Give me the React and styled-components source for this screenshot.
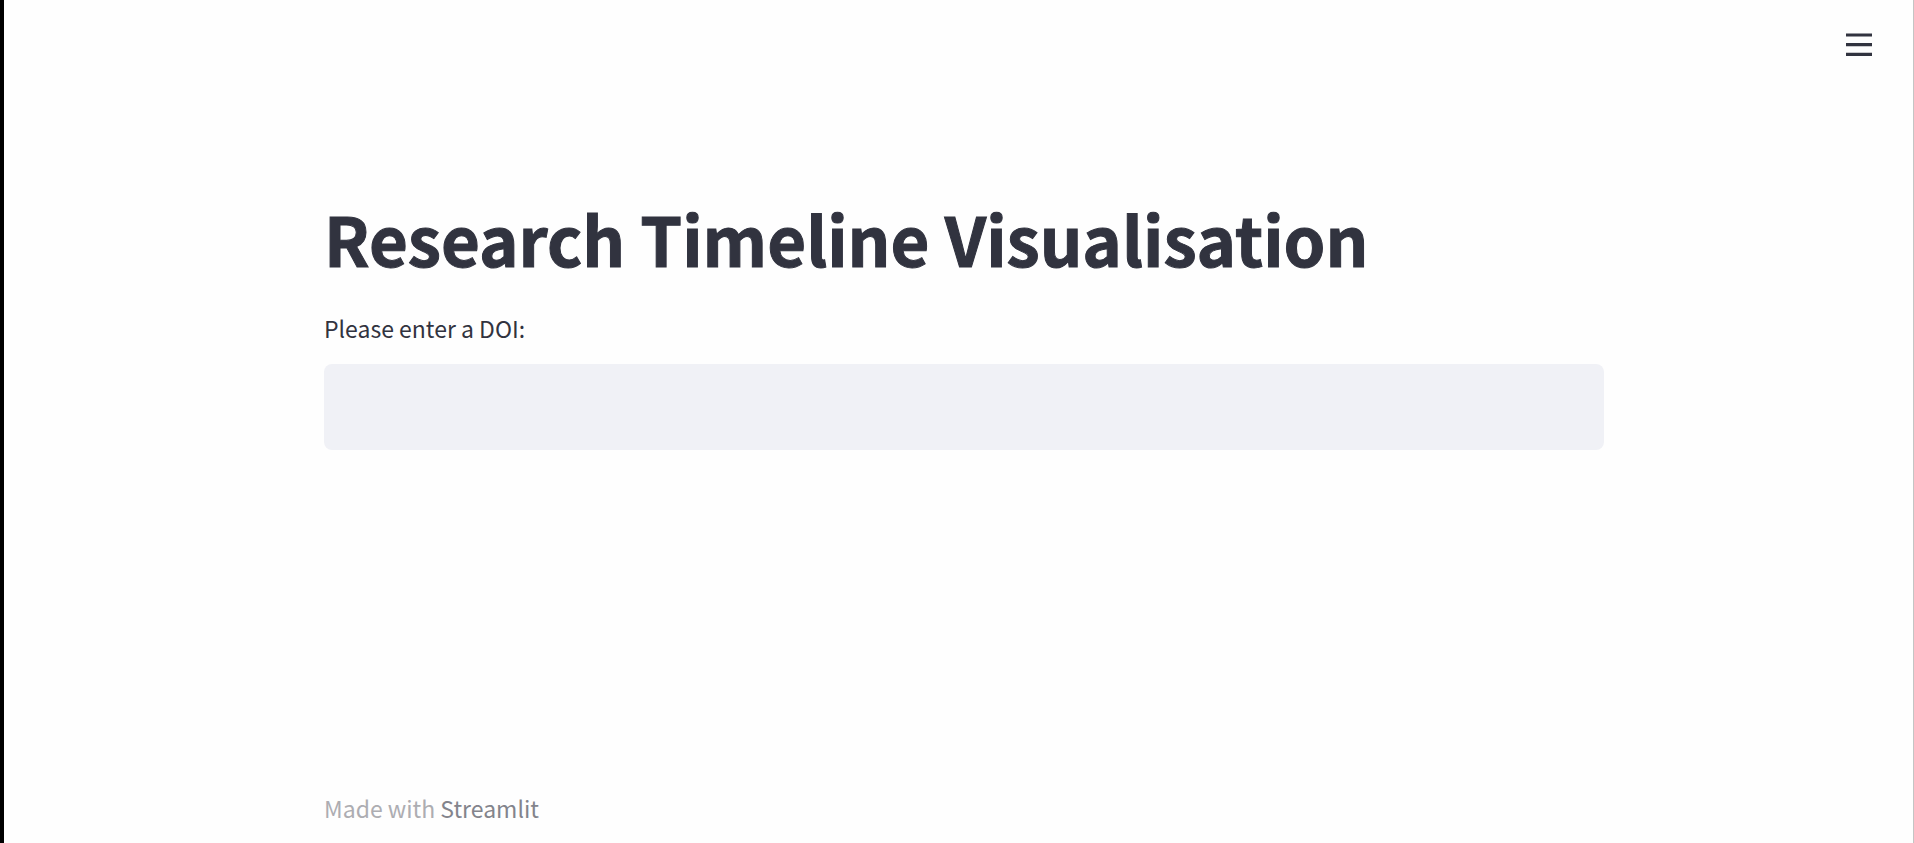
import React from "react";
import styled, { createGlobalStyle } from "styled-components";

const GlobalStyle = createGlobalStyle`
  *, *::before, *::after { box-sizing: border-box; }
  body {
    margin: 0;
    background: #fff;
    color: #31333f;
    font-family: "Noto Sans CJK SC", "Open Sans", sans-serif;
  }
`;

const Page = styled.div`
  display: flex;
  flex-direction: column;
  min-height: 100vh;
  background: #fefefe;
  border-left: 4px solid #000;
  border-right: 1px solid #c4c4c4;
`;

const Header = styled.header`
  display: flex;
  justify-content: flex-end;
  align-items: center;
  height: 90px;
  padding: 0 33px;
`;

const MenuButton = styled.button`
  display: flex;
  padding: 8px;
  border: 0;
  background: transparent;
  color: #31333f;
  cursor: pointer;
`;

const Content = styled.div`
  width: 100%;
  max-width: 1291px;
  margin: 0 auto;
  padding-left: 11px;
`;

const Main = styled(Content).attrs({ as: "main" })`
  flex: 1;
  padding-top: 98px;
`;

const Title = styled.h1`
  margin: 0;
  font-size: 67px;
  font-weight: 700;
  line-height: 100px;
  -webkit-text-stroke: 1px currentColor;
`;

const Field = styled.div`
  display: flex;
  flex-direction: column;
  gap: 18px;
  padding-top: 22px;
`;

const Label = styled.label`
  font-size: 23px;
  line-height: 36px;
`;

const TextInput = styled.input`
  width: 100%;
  height: 86px;
  padding: 0 24px;
  border: 0;
  border-radius: 8px;
  background: #f0f1f6;
  color: inherit;
  font: inherit;
  font-size: 23px;
`;

const Footer = styled(Content).attrs({ as: "footer" })`
  padding-bottom: 17px;
  color: #adadb2;
  font-size: 23px;
  line-height: 36px;
`;

const FooterLink = styled.a`
  color: #83848c;
  text-decoration: none;
`;

function MenuIcon() {
  return (
    <svg width="26" height="24" viewBox="0 0 26 24" fill="currentColor" aria-hidden="true">
      <path d="M0 .4h26v3.2H0zM0 10h26v3.3H0zM0 19.7h26V23H0z" />
    </svg>
  );
}

export default function App() {
  return (
    <>
      <GlobalStyle />
      <Page>
        <Header>
          <MenuButton type="button" aria-label="Menu">
            <MenuIcon />
          </MenuButton>
        </Header>
        <Main>
          <Title>Research Timeline Visualisation</Title>
          <Field>
            <Label htmlFor="doi">Please enter a DOI:</Label>
            <TextInput id="doi" type="text" />
          </Field>
        </Main>
        <Footer>
          Made with <FooterLink href="#streamlit">Streamlit</FooterLink>
        </Footer>
      </Page>
    </>
  );
}
